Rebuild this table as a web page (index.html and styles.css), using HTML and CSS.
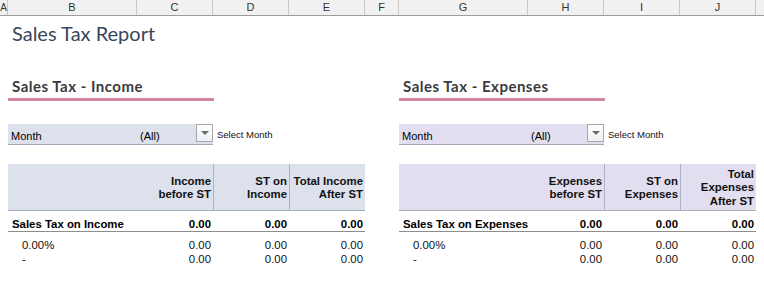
FILE: index.html
```html
<!DOCTYPE html>
<html lang="en">
<head>
    <meta charset="UTF-8">
    <title>Sales Tax Report</title>
    <link rel="stylesheet" href="styles.css">
</head>
<body>
    <div class="colbar">
        <div class="col col-a">A</div>
        <div class="col col-wide">B</div>
        <div class="col col-num">C</div>
        <div class="col col-num">D</div>
        <div class="col col-num">E</div>
        <div class="col col-gap">F</div>
        <div class="col col-wide">G</div>
        <div class="col col-num">H</div>
        <div class="col col-num">I</div>
        <div class="col col-num">J</div>
        <div class="col col-end"></div>
    </div>

    <div class="sheet">
        <h1 class="title">Sales Tax Report</h1>

        <div class="panels">
            <section class="panel income">
                <h2 class="panel-title">Sales Tax - Income</h2>

                <div class="filter-row">
                    <div class="filter">
                        <span class="filter-name">Month</span>
                        <span class="filter-value">(All)</span>
                        <span class="dropdown"><span class="arrow"></span></span>
                    </div>
                    <span class="filter-hint">Select Month</span>
                </div>

                <div class="report">
                    <div class="head"></div>
                    <div class="head">Income<br>before ST</div>
                    <div class="head sep">ST on<br>Income</div>
                    <div class="head sep">Total Income<br>After ST</div>

                    <div class="total label">Sales Tax on Income</div>
                    <div class="total">0.00</div>
                    <div class="total">0.00</div>
                    <div class="total">0.00</div>

                    <div class="line label first">0.00%</div>
                    <div class="line first">0.00</div>
                    <div class="line first">0.00</div>
                    <div class="line first">0.00</div>

                    <div class="line label">-</div>
                    <div class="line">0.00</div>
                    <div class="line">0.00</div>
                    <div class="line">0.00</div>
                </div>
            </section>

            <section class="panel expenses">
                <h2 class="panel-title">Sales Tax - Expenses</h2>

                <div class="filter-row">
                    <div class="filter">
                        <span class="filter-name">Month</span>
                        <span class="filter-value">(All)</span>
                        <span class="dropdown"><span class="arrow"></span></span>
                    </div>
                    <span class="filter-hint">Select Month</span>
                </div>

                <div class="report">
                    <div class="head"></div>
                    <div class="head">Expenses<br>before ST</div>
                    <div class="head sep">ST on<br>Expenses</div>
                    <div class="head sep">Total<br>Expenses<br>After ST</div>

                    <div class="total label">Sales Tax on Expenses</div>
                    <div class="total">0.00</div>
                    <div class="total">0.00</div>
                    <div class="total">0.00</div>

                    <div class="line label first">0.00%</div>
                    <div class="line first">0.00</div>
                    <div class="line first">0.00</div>
                    <div class="line first">0.00</div>

                    <div class="line label">-</div>
                    <div class="line">0.00</div>
                    <div class="line">0.00</div>
                    <div class="line">0.00</div>
                </div>
            </section>
        </div>
    </div>
</body>
</html>
```

FILE: styles.css
```css
* {
    margin: 0;
    padding: 0;
    box-sizing: border-box;
}

body {
    font-family: 'Liberation Sans', Arial, sans-serif;
    font-size: 11px;
    color: #000;
    background: #fff;
    width: 764px;
    height: 282px;
    overflow: hidden;
}

/* spreadsheet column letters */
.colbar {
    display: flex;
    height: 16px;
    background: #f1f1f1;
    border-bottom: 1px solid #9c9c9c;
}

.col {
    flex: none;
    text-align: center;
    line-height: 15px;
    color: #333;
    border-right: 1px solid #c9c9c9;
}

.col-a { width: 8px; font-size: 10px; }
.col-wide { width: 129px; }
.col-num { width: 76px; }
.col-gap { width: 34px; }
.col-end { width: 8px; border-right: none; }

.sheet {
    padding-left: 8px;
}

.title {
    font-family: Lato, 'Open Sans', sans-serif;
    font-weight: 400;
    font-size: 20px;
    line-height: 24px;
    color: #3a455c;
    margin: 5px 0 0 4px;
}

.panels {
    display: flex;
    gap: 34px;
    margin-top: 33px;
}

.panel {
    width: 357px;
}

.panel-title {
    width: 206px;
    font-family: Lato, 'Open Sans', sans-serif;
    font-weight: 700;
    font-size: 15px;
    letter-spacing: 0.5px;
    line-height: 17px;
    color: #3b3b3e;
    padding: 0 0 3px 4px;
    border-bottom: 3px solid #d5879d;
}

/* page filter */
.filter-row {
    display: flex;
    align-items: center;
    margin-top: 23px;
}

.filter {
    display: grid;
    grid-template-columns: 129px 1fr 17px;
    width: 205px;
    height: 21px;
    border-bottom: 1px solid #a3a7b3;
    align-items: end;
}

.income .filter { background: #dde1ec; }
.expenses .filter { background: #e2deef; }

.filter-name {
    padding: 0 0 1px 3px;
    line-height: 13px;
}

.filter-value {
    padding: 0 0 1px 3px;
    line-height: 13px;
}

.dropdown {
    align-self: start;
    height: 18px;
    border: 1px solid #a8a8a8;
    background: linear-gradient(#ffffff, #eef0f4);
    display: flex;
    align-items: center;
    justify-content: center;
}

.arrow {
    width: 0;
    height: 0;
    border-left: 4px solid transparent;
    border-right: 4px solid transparent;
    border-top: 4px solid #6b6b6b;
}

.filter-hint {
    font-size: 9.5px;
    margin-left: 4px;
    margin-top: -1px;
    color: #111;
}

/* pivot table */
.report {
    display: grid;
    grid-template-columns: 129px 76px 76px 76px;
    margin-top: 19px;
    font-size: 11.4px;
}

.head {
    height: 47px;
    border-bottom: 1px solid #a5acbb;
    display: flex;
    align-items: center;
    justify-content: flex-end;
    text-align: right;
    font-weight: 700;
    line-height: 13.5px;
    padding: 2px 2px 0 0;
    color: #111;
    white-space: nowrap;
}

.income .head { background: #dce1ec; }
.expenses .head { background: #e2deef; }

.head.sep {
    border-left: 1px solid #aab3c6;
}

.total {
    height: 21px;
    border-bottom: 1px solid #8e8e8e;
    font-weight: 700;
    text-align: right;
    line-height: 13px;
    padding: 7px 2px 0 0;
    white-space: nowrap;
}

.total.label {
    text-align: left;
    padding-left: 4px;
}

.line {
    text-align: right;
    line-height: 14px;
    padding-right: 2px;
    color: #111;
}

.line.first {
    margin-top: 6px;
}

.line.label {
    text-align: left;
    padding-left: 14px;
}
```
